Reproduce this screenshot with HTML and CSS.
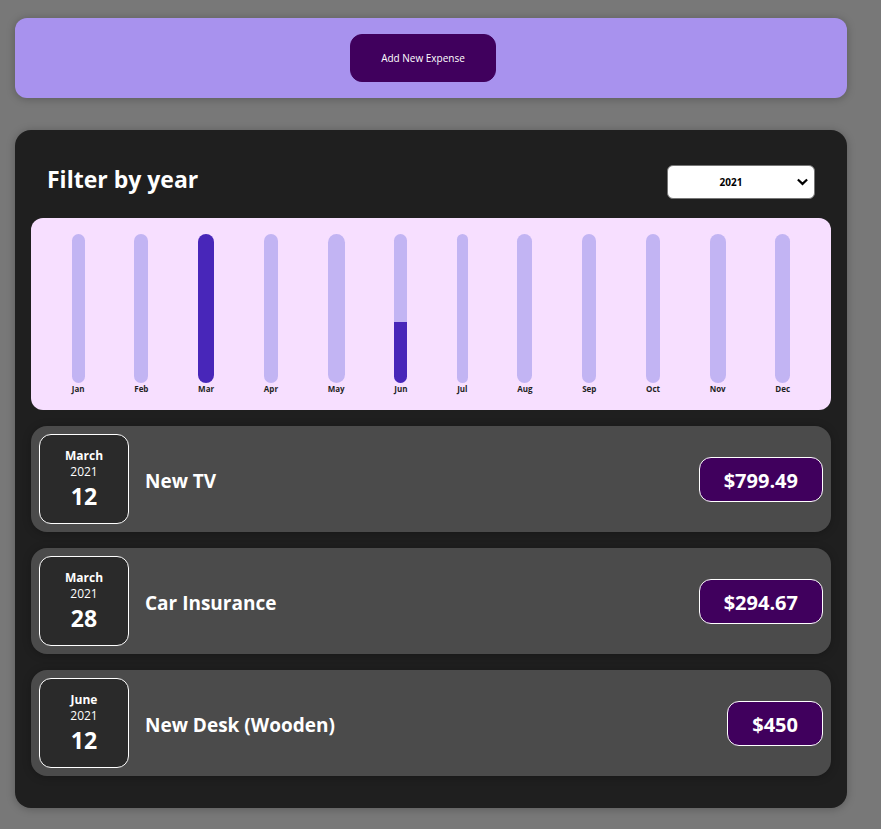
FILE: index.html
```html
<!DOCTYPE html>
<html lang="en">
<head>
<meta charset="utf-8">
<title>Expenses</title>
<link rel="stylesheet" href="styles.css">
</head>
<body>
<section class="new-expense">
  <button type="button" class="new-expense-button">Add New Expense</button>
</section>
<main class="expenses">
  <div class="filter">
    <label class="filter-label" for="year">Filter by year</label>
    <div class="filter-select">
      <select id="year">
        <option>2022</option>
        <option selected>2021</option>
        <option>2020</option>
        <option>2019</option>
      </select>
      <svg class="filter-chevron" viewBox="0 0 10 7" aria-hidden="true"><path d="M0.8 1.2 5 5.2 9.2 1.2"/></svg>
    </div>
  </div>
  <div class="chart">
    <div class="chart-bar"><div class="chart-track"></div><span>Jan</span></div>
    <div class="chart-bar"><div class="chart-track"></div><span>Feb</span></div>
    <div class="chart-bar"><div class="chart-track"><div class="chart-fill" style="height:100%"></div></div><span>Mar</span></div>
    <div class="chart-bar"><div class="chart-track"></div><span>Apr</span></div>
    <div class="chart-bar"><div class="chart-track"></div><span>May</span></div>
    <div class="chart-bar"><div class="chart-track"><div class="chart-fill" style="height:41%"></div></div><span>Jun</span></div>
    <div class="chart-bar"><div class="chart-track"></div><span>Jul</span></div>
    <div class="chart-bar"><div class="chart-track"></div><span>Aug</span></div>
    <div class="chart-bar"><div class="chart-track"></div><span>Sep</span></div>
    <div class="chart-bar"><div class="chart-track"></div><span>Oct</span></div>
    <div class="chart-bar"><div class="chart-track"></div><span>Nov</span></div>
    <div class="chart-bar"><div class="chart-track"></div><span>Dec</span></div>
  </div>
  <ul class="expense-list">
    <li class="expense">
      <div class="date"><div class="date-month">March</div><div class="date-year">2021</div><div class="date-day">12</div></div>
      <h2 class="expense-title">New TV</h2>
      <div class="expense-price">$799.49</div>
    </li>
    <li class="expense">
      <div class="date"><div class="date-month">March</div><div class="date-year">2021</div><div class="date-day">28</div></div>
      <h2 class="expense-title">Car Insurance</h2>
      <div class="expense-price">$294.67</div>
    </li>
    <li class="expense">
      <div class="date"><div class="date-month">June</div><div class="date-year">2021</div><div class="date-day">12</div></div>
      <h2 class="expense-title">New Desk (Wooden)</h2>
      <div class="expense-price">$450</div>
    </li>
  </ul>
</main>
</body>
</html>
```
FILE: styles.css
```css
* {
  box-sizing: border-box;
}

body {
  margin: 0;
  padding: 18px 34px 20px 15px;
  background: #787878;
  color: #fff;
  font-family: "Open Sans", "Noto Sans", sans-serif;
}

.new-expense {
  padding: 16px;
  margin-bottom: 32px;
  display: flex;
  justify-content: center;
  border-radius: 12px;
  background: #a892ee;
  box-shadow: 0 1px 8px rgba(0, 0, 0, 0.25);
}

.new-expense-button {
  height: 48px;
  padding: 0 30px;
  margin-right: 16px;
  border: 1px solid #40005d;
  border-radius: 12px;
  background: #40005d;
  color: #fff;
  font: 10px/16px "Open Sans", sans-serif;
  cursor: pointer;
}

.expenses {
  padding: 16px;
  border-radius: 16px;
  background: #1f1f1f;
  box-shadow: 0 1px 8px rgba(0, 0, 0, 0.25);
}

.filter {
  display: flex;
  justify-content: space-between;
  align-items: center;
  height: 72px;
  padding: 0 16px;
}

.filter-label {
  padding-bottom: 6px;
  font-size: 23px;
  line-height: 32px;
  font-weight: 700;
}

.filter-select {
  position: relative;
}

.filter-select select {
  appearance: none;
  display: block;
  width: 148px;
  height: 34px;
  padding: 0 20px 0 0;
  border: 1px solid #767676;
  border-radius: 6px;
  background: #fff;
  color: #000;
  font: 700 10px/16px "Open Sans", sans-serif;
  text-align: center;
}

.filter-chevron {
  position: absolute;
  right: 7px;
  top: 13px;
  width: 11px;
  height: 8px;
  fill: none;
  stroke: #000;
  stroke-width: 2;
  pointer-events: none;
}

.chart {
  display: flex;
  justify-content: space-around;
  height: 192px;
  padding: 16px;
  border-radius: 12px;
  background: #f7dfff;
}

.chart-bar {
  display: flex;
  flex-direction: column;
  color: #1f1f1f;
  font-size: 8px;
  line-height: 11px;
  font-weight: 700;
  text-align: center;
}

.chart-track {
  display: flex;
  flex-direction: column;
  justify-content: flex-end;
  flex: 1;
  overflow: hidden;
  border-radius: 12px;
  background: #c2b4f3;
}

.chart-fill {
  background: #4826b9;
}

.expense-list {
  margin: 0;
  padding: 0 0 16px;
  list-style: none;
}

.expense {
  display: flex;
  align-items: center;
  gap: 16px;
  margin-top: 16px;
  padding: 8px;
  border-radius: 16px;
  background: #4b4b4b;
  box-shadow: 0 1px 8px rgba(0, 0, 0, 0.25);
}

.date {
  display: flex;
  flex-direction: column;
  align-items: center;
  justify-content: center;
  width: 90px;
  height: 90px;
  padding-top: 2px;
  border: 1px solid #fff;
  border-radius: 12px;
  background: #2a2a2a;
  font-size: 12px;
  line-height: 16px;
}

.date-month {
  font-weight: 700;
}

.date-day {
  font-size: 23px;
  line-height: 32px;
  font-weight: 700;
}

.expense-title {
  flex: 1;
  margin: 0;
  padding-top: 4px;
  font-size: 19px;
  line-height: 26px;
  font-weight: 700;
}

.expense-price {
  padding: 9px 24px 7px;
  border: 1px solid #fff;
  border-radius: 12px;
  background: #40005d;
  font-size: 20px;
  line-height: 27px;
  font-weight: 700;
}
```
